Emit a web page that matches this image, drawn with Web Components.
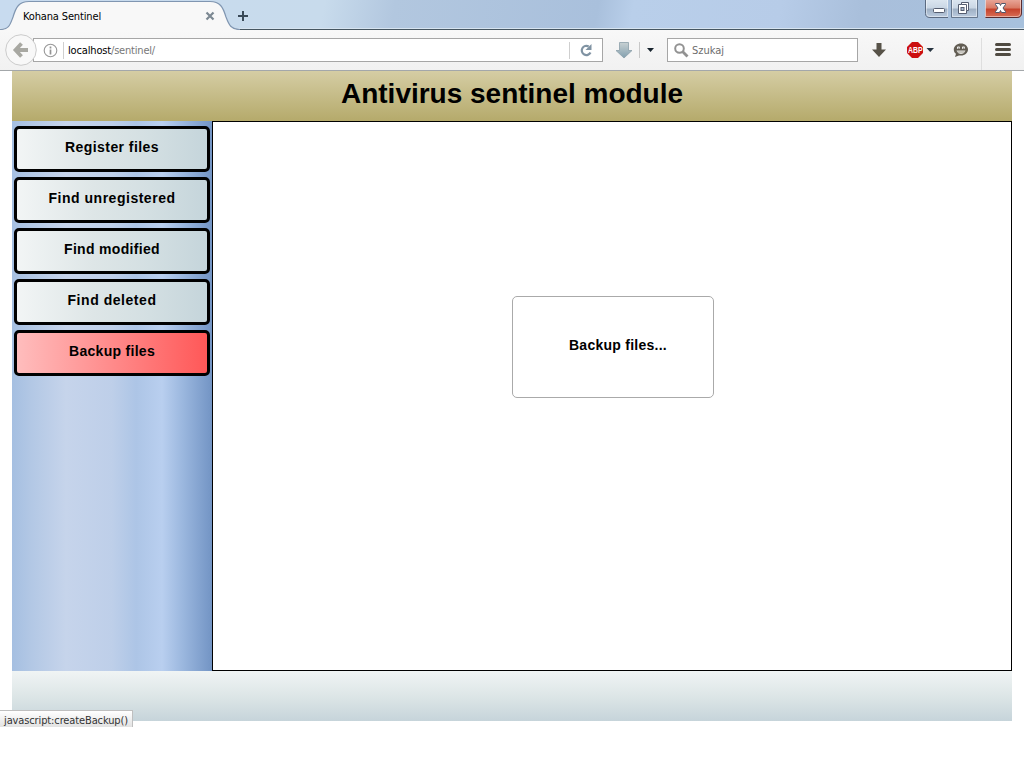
<!DOCTYPE html>
<html lang="en"><head><meta charset="utf-8"><title>Kohana Sentinel</title>
<style>html,body{margin:0;width:1024px;height:768px;overflow:hidden;background:#fff}</style></head>
<body><app-window></app-window>
<script>
const define=(name,html,init)=>customElements.define(name,class extends HTMLElement{
  constructor(){super();const t=document.createElement('template');t.innerHTML=html;
    this.attachShadow({mode:'open'}).append(t.content.cloneNode(true));}
  connectedCallback(){if(init)init.call(this);}
});

// A single-line label whose tracking is adjusted to a given advance width.
define('fit-text',`<style>:host{display:inline-block;white-space:pre;line-height:1;flex:none}span{display:inline-block}</style><span><slot></slot></span>`,function(){
  const s=this.shadowRoot.querySelector('span'),target=+this.getAttribute('fit');
  const n=this.textContent.length,w=s.getBoundingClientRect().width;
  if(target&&w)s.style.letterSpacing=((target-w)/n)+'px';
});

define('tab-strip',`<style>
:host{display:flex;height:30px;box-sizing:border-box;background:linear-gradient(100deg,#c8dbef 0,#c8dbec 320px,#b2c7df 390px,#a9c0dc 590px,#b9cfea 625px,#b7cce8 770px,#a9bfdb 850px,#a7c1dd);box-shadow:inset 0 -2px #d7e4f0;position:relative;font:11px "DejaVu Sans Condensed","Noto Sans",sans-serif;color:#000}
.tab{position:relative;width:238px;height:30px;display:flex;align-items:center;box-sizing:border-box;padding:2px 22px 0 23px;justify-content:space-between;z-index:1}
.tab>svg.shape{position:absolute;left:0;top:0;z-index:-1}
.line{position:absolute;left:0;right:0;bottom:0;height:1px;background:#465661}
.plus{margin:10px 0 0 -1px;z-index:1}.grow{flex:1}
.controls{display:flex;align-items:flex-start;z-index:1}
</style><div class="line"></div>
<div class="tab"><svg class="shape" width="242" height="30"><path d="M0 29.5C9 29.5 10 25 13 17C16 7 19 1.500 29 1.500H210C220 1.500 223 7 226 17C229 25 231 29.500 240 29.500V30H0Z" fill="#f8f8f8"/><path d="M0 29.500C9 29.500 10 25 13 17C16 7 19 1.500 29 1.500H210C220 1.500 223 7 226 17C229 25 231 29.500 240 29.500" fill="none" stroke="#8096b1" stroke-width="1.200"/></svg>
<fit-text fit="78">Kohana Sentinel</fit-text><svg width="10" height="10" viewBox="0 0 10 10" style="margin-right:1px"><path d="M1.500 1.500l7 7M8.500 1.500l-7 7" stroke="#7c8892" stroke-width="2.200"/></svg></div>
<svg class="plus" width="12" height="12"><path d="M6 1v10M1 6h10" stroke="#394957" stroke-width="2"/></svg><div class="grow"></div>
<div class="controls"><svg width="99" height="20" viewBox="0 0 99 20"><defs><linearGradient id="g" x2="0" y2="1"><stop stop-color="#dde7f1"/><stop offset=".5" stop-color="#c9d6e4"/><stop offset=".53" stop-color="#9eafc3"/><stop offset="1" stop-color="#bccce0"/></linearGradient><linearGradient id="r" x2="0" y2="1"><stop stop-color="#e9a99c"/><stop offset=".5" stop-color="#d87964"/><stop offset=".53" stop-color="#c5402a"/><stop offset="1" stop-color="#d97058"/></linearGradient></defs>
<path d="M.5-1V13.500Q.5 17.500 5 17.500H23V-1Z" fill="url(#g)"/><path d="M.5-1V13.500Q.5 17.500 5 17.500H23" fill="none" stroke="#5b6a80"/><path d="M26.500-1V17.500H52.500V-1Z" fill="url(#g)" stroke="#66778d"/><path d="M60.500-1V17.500H92Q96.500 17.500 96.500 13V-1Z" fill="url(#r)"/><path d="M60.500 17.500H92Q96.500 17.500 96.500 13V-1" fill="none" stroke="#582c30"/>
<path d="M1.500 0V13Q1.500 16.500 5 16.500H22.500V0M27.500 0V16.500H51.500V0M60.500 0V16.500H92Q95.500 16.500 95.500 13V0" fill="none" stroke="#fff" stroke-opacity=".45"/>
<rect x="8.500" y="8.500" width="11" height="4" rx="1" fill="#fff" stroke="#555d70"/>
<path d="M36.500 2.500h7v8h-2v3h-8v-9h3z" fill="#fff" stroke="#555d70"/><path d="M36.500 4.500h5v6" fill="none" stroke="#555d70"/><rect x="36" y="7.500" width="3" height="3" fill="#adbdd0" stroke="#555d70"/>
<path d="M70.500 3.500h4l1 2 1-2h4v1l-2.500 3.500 2.500 3.500v1h-4l-1-2-1 2h-4v-1l2.500-3.500-2.500-3.500z" fill="#fff" stroke="#52566a"/></svg></div>`);

define('nav-toolbar',`<style>
:host{display:flex;height:41px;box-sizing:border-box;background:linear-gradient(#f8f8f8,#f1f1f1);border-bottom:1px solid #a3a7aa;padding:8px 0 0 5px;align-items:flex-start;font:11px "DejaVu Sans Condensed","Noto Sans",sans-serif;color:#000}
.back{margin-top:-4px;position:relative;z-index:1;flex:none}
.url{box-sizing:border-box;width:570px;height:24px;border:1px solid #a6a6a6;background:#fff;margin-left:-4px;display:flex;align-items:center;padding-left:9px;flex:none}
.sep{width:1px;height:17px;background:#cfcfcf;margin:0 4px 0 6px}.host{color:#000}.path{color:#777}.grow{flex:1}
.search{box-sizing:border-box;width:191px;height:24px;border:1px solid #a6a6a6;background:#fff;display:flex;align-items:center;padding-left:6px;color:#6d6d6d;flex:none}
.url fit-text,.search fit-text{padding-top:1px}
.tools{flex:none;display:block}
</style>
<svg class="back" width="32" height="32"><circle cx="16" cy="16" r="15.300" fill="#f8f8f8" stroke="#cbcbcb"/><path d="M16.500 9.500l-6 6.500 6 6.500M11 16h12" fill="none" stroke="#a8a8a2" stroke-width="3.800"/></svg>
<div class="url"><svg width="15" height="15"><circle cx="7.500" cy="7.500" r="6.300" fill="none" stroke="#989898" stroke-width="1.100"/><path d="M7.500 3.500v2M7.500 6.500v5" stroke="#949494" stroke-width="1.700"/></svg><i class="sep" style="margin-left:5px"></i><fit-text class="host" fit="43">localhost</fit-text><fit-text class="path" fit="44">/sentinel/</fit-text><div class="grow"></div><i class="sep" style="margin:0 9px 0 0"></i>
<svg width="14" height="14" style="margin-right:9px"><path d="M11.500 9.500A4.600 4.600 0 1 1 9.700 3.500" fill="none" stroke="#8093a3" stroke-width="2.200"/><path d="M12.500 1v6H6.500z" fill="#8093a3"/></svg></div>
<svg class="tools" width="64" height="24"><defs><linearGradient id="d" x2="0" y2="1"><stop stop-color="#c8d1d3"/><stop offset="1" stop-color="#829fae"/></linearGradient></defs><path d="M16.500 4.500h9v8h3.500l-8 7.500-8-7.500h3.500z" fill="url(#d)" stroke="#8ba0aa" stroke-width=".8"/><path d="M36.500 4v16" stroke="#c8c8c8"/><path d="M44 10h7l-3.500 4z" fill="#17232d"/></svg>
<div class="search"><svg width="15" height="15"><circle cx="5.500" cy="5.500" r="4.300" fill="none" stroke="#929292" stroke-width="2"/><path d="M8.500 8.500l5 5" stroke="#929292" stroke-width="2.800"/></svg><fit-text fit="32" style="margin-left:3px">Szukaj</fit-text></div>
<svg class="tools" width="166" height="32" viewBox="858 38 166 32"><path d="M876.500 43h5v6.500h4.500l-7 7.500-7-7.500h4.500z" fill="#575248"/>
<path d="M912 42h6l5 5v6l-5 5h-6l-5-5v-6z" fill="#cc1010"/><text x="908" y="53" textLength="14.500" lengthAdjust="spacingAndGlyphs" font-family="Liberation Sans" font-size="8.500" font-weight="bold" fill="#fff">ABP</text>
<path d="M926.500 48h7.500l-3.750 4z" fill="#26333f"/>
<path d="M961 43.500c4 0 7 2.700 7 6s-3 6-7 6l-2 0-4 1.500 1-3.200c-1.500-1-2.200-2.500-2.200-4.300 0-3.300 3.200-6 7.200-6" fill="#625d53"/><rect x="957" y="46.500" width="3" height="2.500" rx="1" fill="#f4f4f4"/><rect x="962" y="46.500" width="3" height="2.500" rx="1" fill="#f4f4f4"/><path d="M958.800 47.500v1.500M963.800 47.500v1.500" stroke="#625d53"/><path d="M956.500 50.500h9q-1.500 3.500-4.500 3.500t-4.500-3.500z" fill="#e4e3df"/><path d="M957.500 52h7" stroke="#8b877e" stroke-width=".6"/>
<path d="M981.500 30v40" stroke="#dedede"/><path d="M996.500 44.500h13M996.500 49.500h13M996.500 54.500h13" stroke="#504b42" stroke-width="3" stroke-linecap="round"/></svg>`);

define('menu-button',`<style>
:host{display:block;height:46px}button{display:block;width:196px;height:46px;box-sizing:border-box;border:3px solid #000;border-radius:5px;background:linear-gradient(90deg,#f2f5f5,#dee6e7 40%,#d3dfe2 70%,#c5d5db);padding:0 0 4px;font:bold 14px "Liberation Sans",Arial,sans-serif;color:#000;text-align:center}
:host([active]) button{background:linear-gradient(90deg,#ffbdbd,#ff5858)}
</style><button><slot></slot></button>`);

define('side-menu',`<style>:host{display:flex;flex-direction:column;gap:5px;width:200px;height:550px;box-sizing:border-box;padding:5px 2px;background:linear-gradient(90deg,#a5bfe1 0%,#b3c8e5 10%,#c6d4eb 27%,#becfe9 50%,#adc5e6 62%,#b9cfef 75%,#9cb8df 85%,#7899c8 98%,#7394c3)}</style>
<menu-button><fit-text fit="94">Register files</fit-text></menu-button><menu-button><fit-text fit="127">Find unregistered</fit-text></menu-button><menu-button><fit-text fit="96">Find modified</fit-text></menu-button><menu-button><fit-text fit="89">Find deleted</fit-text></menu-button><menu-button active><fit-text fit="86">Backup files</fit-text></menu-button>`);

define('message-panel',`<style>:host{display:flex;width:800px;height:550px;box-sizing:border-box;border:1px solid #000;background:#fff;align-items:flex-start;justify-content:center;padding:174px 0 0 2px}
div{width:202px;height:102px;box-sizing:border-box;border:1px solid #aaa;border-radius:5px;display:flex;align-items:center;justify-content:center;font:bold 14px "Liberation Sans",Arial,sans-serif;color:#000;padding:0 0 4px 10px}</style><div><fit-text fit="98">Backup files...</fit-text></div>`);

define('sentinel-page',`<style>:host{display:block;width:1000px;margin:0 auto}
header{height:50px;background:linear-gradient(#d5cda4,#b5aa6b);display:flex;justify-content:center;align-items:center;box-sizing:border-box;padding-bottom:5px;font:bold 28px "Liberation Sans",Arial,sans-serif;color:#000}
main{display:flex}footer{height:50px;background:linear-gradient(#f0f4f4,#dde6e7 50%,#c6d4da)}</style>
<header><fit-text fit="342">Antivirus sentinel module</fit-text></header><main><side-menu></side-menu><message-panel></message-panel></main><footer></footer>`);

define('status-tip',`<style>:host{position:absolute;left:0;top:710px;width:133px;height:17px;box-sizing:border-box;border:1px solid #bfbfbf;border-left:0;border-bottom:0;background:linear-gradient(#fff,#e2e2e2);font:11px "DejaVu Sans Condensed","Noto Sans",sans-serif;color:#333;padding:4px 0 0 4px;display:flex}</style><fit-text fit="124">javascript:createBackup()</fit-text>`);

define('app-window',`<style>:host{display:block;position:relative;width:1024px;height:768px;background:#fff;overflow:hidden}</style><tab-strip></tab-strip><nav-toolbar></nav-toolbar><sentinel-page></sentinel-page><status-tip></status-tip>`);
</script></body></html>
